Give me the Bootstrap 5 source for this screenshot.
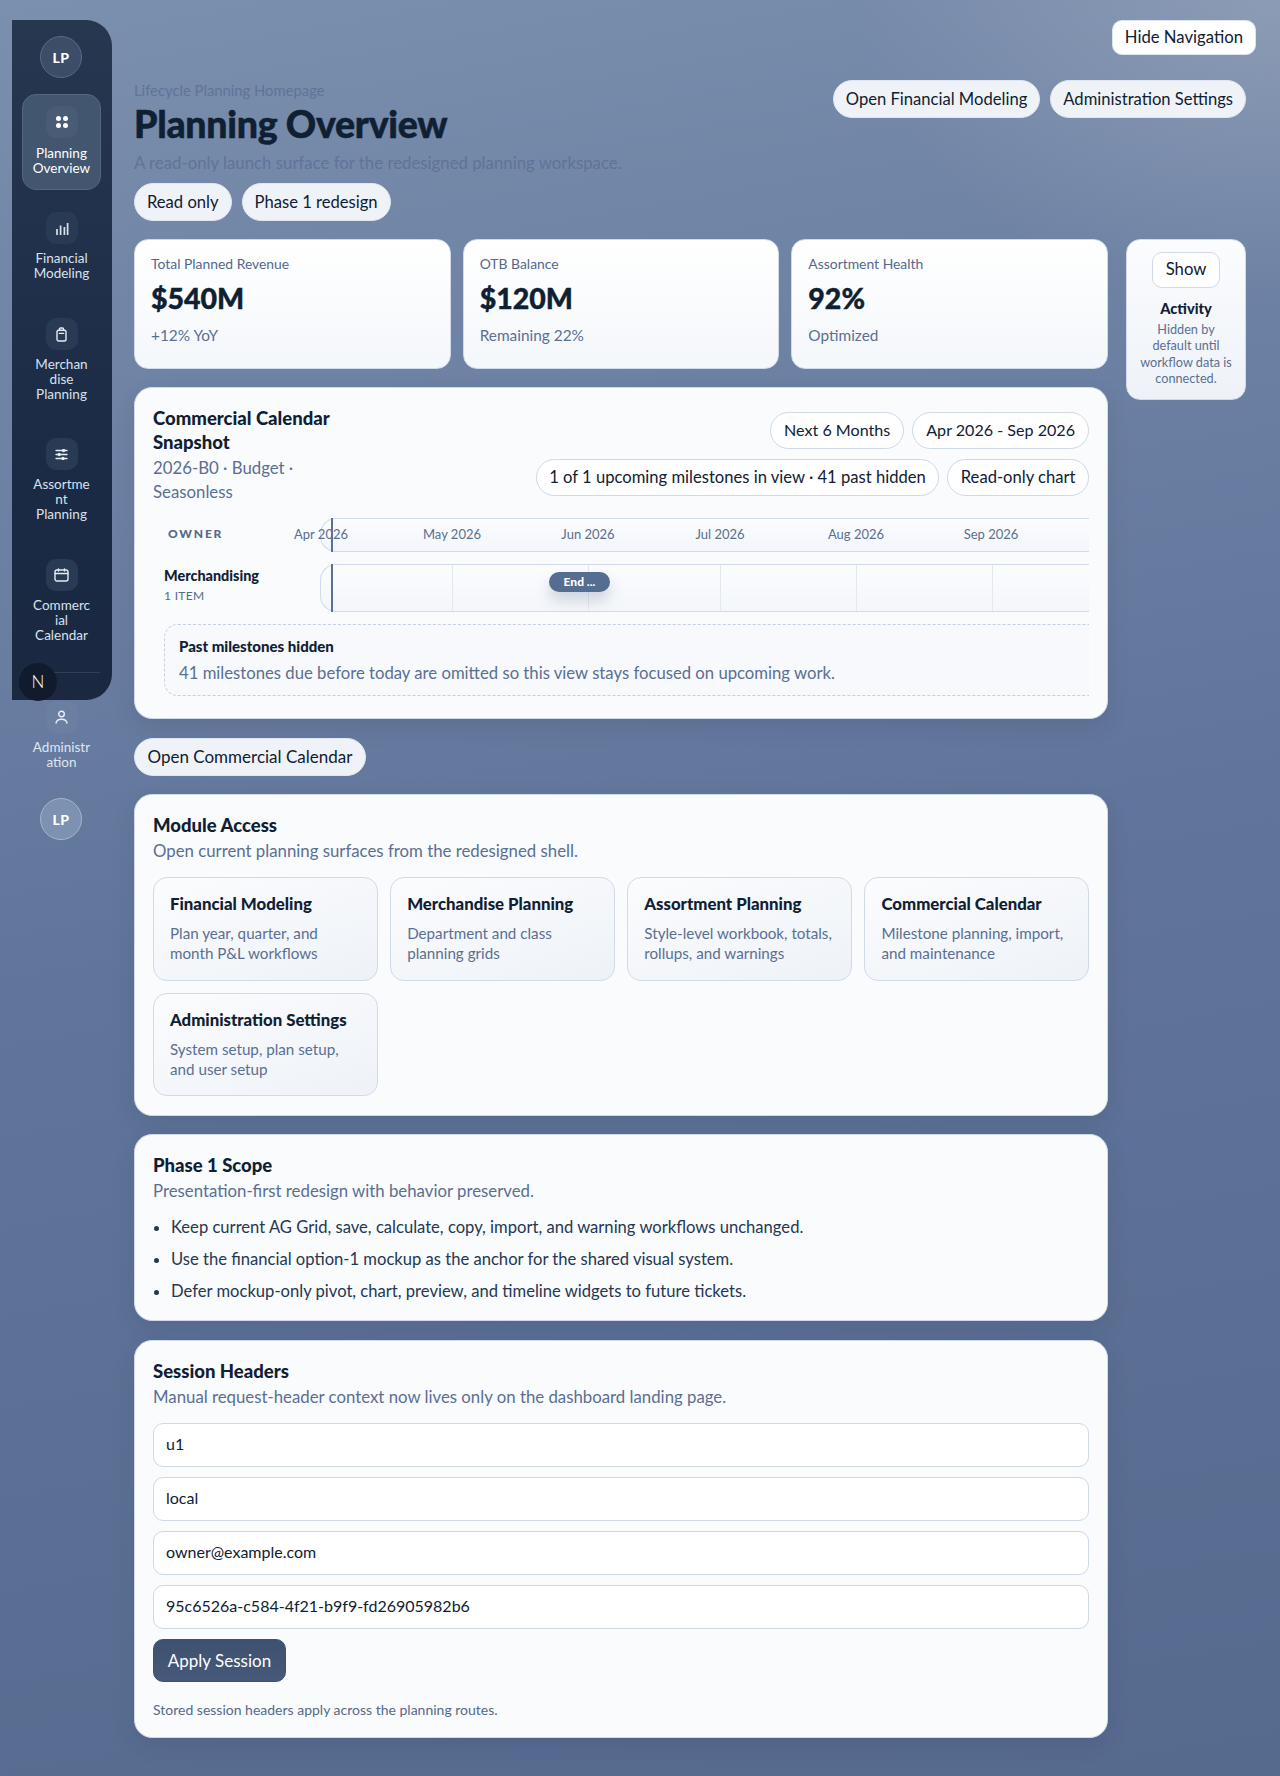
<!DOCTYPE html>
<html lang="en">
<head>
<meta charset="utf-8">
<title>Planning Overview</title>
<link rel="stylesheet" href="https://cdn.jsdelivr.net/npm/bootstrap@5.3.0/dist/css/bootstrap.min.css">
<style>
html,body{height:1776px}
body{font-family:"Lato","Open Sans","Liberation Sans",sans-serif;color:#102033;font-size:16.7px;line-height:1.5;
 background:radial-gradient(420px 300px at 100% 0,rgba(160,172,192,.55),rgba(160,172,192,0)),linear-gradient(170deg,#7b8fae 0,#7286a7 15%,#60759b 50%,#566a8e 100%);overflow:hidden}
.shell{padding-left:12px;height:1776px}
.side{width:100px;height:680px;margin-top:20px;flex:none;background:linear-gradient(180deg,#273750 0,#1a2a45 70%,#1a2840 100%);border-radius:0 26px 26px 0;position:relative;padding-top:16px}
.ava{width:42px;height:42px;border-radius:50%;background:#3b4d67;border:1px solid #596b84;color:#fff;font-weight:900;font-size:14px;letter-spacing:.5px;margin-left:28px}
.ava-b{background:#7d91b0;border-color:#a5b4ca;margin-top:9px}
.nav-it{width:79px;margin-left:10px;border-radius:14px;border:1px solid transparent;color:#d9e1ec;font-size:13.5px;line-height:15px;text-align:center;text-decoration:none;padding:11px 0}
.nav-it.is-on{background:#43566f;border-color:#54677f;color:#fff;margin-top:16px;height:96px}
.ico{width:32px;height:32px;border-radius:10px;background:#293a54;margin-bottom:7px}
.is-on .ico{background:#4a5c75;margin-bottom:8px}
.nav-out{color:#dfe6f0}
.nav-out .ico{background:#6a7fa2}
.nb{position:absolute;left:7px;top:643px;width:38px;height:38px;border-radius:50%;background:#101c2d;color:#fff;font-size:17px;font-weight:300;z-index:3}
.rule{height:1px;background:#2f4059;margin:0 12px 0 10px}
.main-col{padding:20px 24px 0 22px;min-width:0}
.hide-btn{background:#fff;border:1px solid #dbe3ee;border-radius:10px;color:#102033;font-size:16.7px;height:35px;padding:0 12px;line-height:1}
.pg-eye{font-size:14.8px;color:#5f7498;line-height:20px}
.pg-title{font-size:37.5px;font-weight:900;line-height:47px;margin:0;color:#102033;letter-spacing:-.3px;-webkit-text-stroke:.5px #102033}
.pg-sub{font-size:16.8px;color:#5f7498;line-height:24px;margin:4px 0 8px}
.chip{display:inline-flex;align-items:center;height:38px;padding:0 12.5px;border-radius:19px;background:#eff3f8;border:1px solid #dfe6ef;color:#102033;font-size:17px;white-space:nowrap;text-decoration:none}
.chip-m{font-size:16.6px;padding:0 12px}
.chip-w{background:#fff;border-color:#cfd9e6;height:37px;font-size:16.6px}
.chip-s{font-size:16.1px;padding:0 13px}
.head-row{margin-top:25px;padding-right:10px}
.tile{background:linear-gradient(180deg,#fff 0,#f4f7fb 100%);border:1px solid #d0dae8;border-radius:14px;height:130px;padding:15px 16px;flex:1 1 0}
.tile-lab{font-size:13.9px;color:#54688b;line-height:18px}
.tile-val{font-size:28.5px;font-weight:900;line-height:34px;margin-top:8px;color:#102033;-webkit-text-stroke:.4px #102033}
.tile-sub{font-size:15.4px;color:#5b6f92;line-height:20px;margin-top:10px}
.act{width:120px;height:161px;flex:none;background:linear-gradient(180deg,#fbfcfe,#eef2f8);border:1px solid #d0dae8;border-radius:14px;text-align:center;padding:12px 12px}
.act-btn{width:68px;height:36px;border:1px solid #d0dae8;background:#fff;border-radius:10px;font-size:16.7px;color:#102033;padding:0}
.act-t{font-size:14.6px;font-weight:900;margin-top:11px;line-height:20px}
.act-d{font-size:12.7px;line-height:16.4px;color:#5b6f92;margin-top:2px}
.panel{background:#f9fbfd;border:1px solid #d0dae8;border-radius:18px;padding:18px;width:974px;box-shadow:0 8px 22px rgba(30,45,75,.12)}
.p-title{font-size:18.5px;font-weight:900;line-height:24px;color:#102033;margin:0}
.p-sub{font-size:16.8px;color:#5b6f92;line-height:24px;margin:2px 0 0}
.cal-l{width:184px}
.owner{font-size:12px;font-weight:900;letter-spacing:1.8px;color:#56698a}
.tl-wrap{overflow:hidden;position:relative;height:178px;margin-top:14px;margin-left:11px}
.tl-head{position:absolute;left:156px;top:0;width:800px;height:34px;border:1px solid #d0dae8;border-right:0;border-radius:16px 0 0 16px;background:linear-gradient(180deg,#fbfcfe,#f3f6fa)}
.tl-track{position:absolute;left:156px;top:46px;width:800px;height:48px;border:1px solid #d0dae8;border-right:0;border-radius:16px 0 0 16px;background:linear-gradient(180deg,#fbfcfe,#f3f6fa)}
.mlab{position:absolute;top:16px;transform:translate(-50%,-50%);font-size:13px;color:#5a6e91;white-space:nowrap;line-height:1}
.today{position:absolute;left:167px;width:2px;background:#5a7097;z-index:2}
.gl{position:absolute;top:47px;height:46px;width:1px;background:#e3e8ef}
.ms{position:absolute;left:385px;top:54px;width:61px;height:20px;border-radius:10px;background:#566d92;color:#fff;font-size:12px;font-weight:900;line-height:20px;text-align:center;box-shadow:0 8px 14px rgba(60,80,115,.22)}
.own{position:absolute;top:16px;left:4px;transform:translateY(-50%);line-height:1}
.own2{position:absolute;left:0;top:48px}
.own2 b{display:block;font-size:14.4px;font-weight:900;line-height:20px;color:#102033}
.own2 span{display:block;font-size:12px;color:#56698a;line-height:18px;letter-spacing:.3px;margin-top:1px}
.past{position:absolute;left:0;top:106px;width:1000px;height:72px;border:1px dashed #c4d0e0;border-radius:14px;padding:10px 14px;background:#f7f9fc}
.past b{display:block;font-size:15px;font-weight:900;line-height:22px}
.past span{display:block;font-size:16.7px;color:#5b6f92;line-height:24px;margin-top:4px}
.mods{display:grid;grid-template-columns:repeat(4,1fr);gap:12px 12.6px;margin-top:14px}
.mod{height:103.5px;border:1px solid #d0dae8;border-radius:14px;background:linear-gradient(160deg,#fbfcfe,#eef2f7);padding:15px 16px;text-decoration:none;display:block}
.mod b{display:block;font-size:16.8px;font-weight:900;line-height:22px;color:#102033}
.mod span{display:block;font-size:15.2px;line-height:20px;color:#5b6f92;margin-top:8px}
.scope{margin:12px 0 0;padding-left:18px;font-size:16.6px;color:#253752;line-height:24px}
.scope li{margin-bottom:8px}
.scope li:last-child{margin-bottom:0}
.inp{height:44px;border:1px solid #cfd9e6;border-radius:10px;font-size:16px;color:#102033;padding:0 12px 3px;margin-bottom:10px;box-shadow:none}
.apply{background:linear-gradient(180deg,#3e516f,#46597a);color:#fff;border:1px solid #3e516f;border-radius:10px;height:43px;width:133px;font-size:17px;padding:0}
.hint{font-size:14px;color:#56698a;line-height:18px;margin-top:19px}
</style>
</head>
<body>
<div class="shell d-flex">
  <aside class="side">
    <div class="ava d-flex align-items-center justify-content-center">LP</div>
    <a class="nav-it is-on d-block" href="#">
      <span class="ico d-flex align-items-center justify-content-center mx-auto"><svg width="14" height="14" viewBox="0 0 14 14" fill="#fff"><circle cx="3.5" cy="3.5" r="2.5"/><circle cx="10.5" cy="3.5" r="2.5"/><circle cx="3.5" cy="10.5" r="2.5"/><circle cx="10.5" cy="10.5" r="2.5"/></svg></span>
      Planning<br>Overview</a>
    <a class="nav-it d-block" href="#" style="height:106px;margin-top:10px">
      <span class="ico d-flex align-items-center justify-content-center mx-auto"><svg width="14" height="13" viewBox="0 0 14 13" fill="none" stroke="#d9e1ec" stroke-width="1.7"><path d="M2 13V7M5.6 13V3.5M9.4 13V5M12.6 13V1"/></svg></span>
      Financial<br>Modeling</a>
    <a class="nav-it d-block" href="#" style="height:120px">
      <span class="ico d-flex align-items-center justify-content-center mx-auto"><svg width="11" height="15" viewBox="0 0 11 15" fill="none" stroke="#e6ecf4" stroke-width="1.4" stroke-linejoin="round" stroke-linecap="round"><rect x="1" y="3.2" width="9" height="10.8" rx="1.8"/><path d="M3.4 3.2V2.2C3.4 1.5 3.9 1 4.6 1H6.4C7.1 1 7.6 1.5 7.6 2.2V3.2M3.4 6.4H7.6"/></svg></span>
      Merchan<br>dise<br>Planning</a>
    <a class="nav-it d-block" href="#" style="height:121px">
      <span class="ico d-flex align-items-center justify-content-center mx-auto"><svg width="13" height="11" viewBox="0 0 13 11" fill="none" stroke="#e6ecf4" stroke-width="1.3" stroke-linecap="round"><path d="M1 1.5H12M1 5.5H12M1 9.5H12"/><circle cx="8.6" cy="1.5" r="1" fill="#e6ecf4"/><circle cx="4.2" cy="5.5" r="1" fill="#e6ecf4"/><circle cx="8" cy="9.5" r="1" fill="#e6ecf4"/></svg></span>
      Assortme<br>nt<br>Planning</a>
    <a class="nav-it d-block" href="#" style="height:125px">
      <span class="ico d-flex align-items-center justify-content-center mx-auto"><svg width="15" height="14" viewBox="0 0 15 14" fill="none" stroke="#e6ecf4" stroke-width="1.4" stroke-linecap="round"><rect x="1" y="2" width="13" height="11" rx="2"/><path d="M1 5.5H14M4.5 1V3M10.5 1V3"/></svg></span>
      Commerc<br>ial<br>Calendar</a>
    <div class="rule"></div>
    <a class="nav-it nav-out d-block" href="#" style="margin-top:16px;height:100px">
      <span class="ico d-flex align-items-center justify-content-center mx-auto"><svg width="13" height="14" viewBox="0 0 13 14" fill="none" stroke="#e9eef5" stroke-width="1.4" stroke-linecap="round"><circle cx="6.5" cy="4" r="2.8"/><path d="M1 13C1.6 10.4 3.6 9.2 6.5 9.2S11.4 10.4 12 13"/></svg></span>
      Administr<br>ation</a>
    <div class="ava ava-b d-flex align-items-center justify-content-center">LP</div>
    <div class="nb d-flex align-items-center justify-content-center">N</div>
  </aside>

  <div class="main-col flex-grow-1">
    <div class="d-flex justify-content-end"><button class="btn hide-btn" type="button">Hide Navigation</button></div>
    <div class="head-row d-flex justify-content-between align-items-start">
      <div>
        <div class="pg-eye">Lifecycle Planning Homepage</div>
        <h1 class="pg-title">Planning Overview</h1>
        <p class="pg-sub">A read-only launch surface for the redesigned planning workspace.</p>
        <div class="d-flex" style="gap:10px"><span class="chip chip-m">Read only</span><span class="chip chip-m">Phase 1 redesign</span></div>
      </div>
      <div class="d-flex" style="gap:10px"><a class="chip chip-m" href="#">Open Financial Modeling</a><a class="chip chip-m" href="#">Administration Settings</a></div>
    </div>

    <div class="d-flex" style="gap:18px;margin-top:18px;height:148px">
      <div style="width:974px" class="d-flex gap-0 justify-content-between">
        <div class="d-flex w-100" style="gap:12px">
          <div class="tile"><div class="tile-lab">Total Planned Revenue</div><div class="tile-val">$540M</div><div class="tile-sub">+12% YoY</div></div>
          <div class="tile"><div class="tile-lab">OTB Balance</div><div class="tile-val">$120M</div><div class="tile-sub">Remaining 22%</div></div>
          <div class="tile"><div class="tile-lab">Assortment Health</div><div class="tile-val">92%</div><div class="tile-sub">Optimized</div></div>
        </div>
      </div>
      <div class="act"><button class="btn act-btn" type="button">Show</button><div class="act-t">Activity</div><div class="act-d">Hidden by default until workflow data is connected.</div></div>
    </div>

    <section class="panel" style="height:332px">
      <div class="d-flex justify-content-between align-items-start">
        <div class="cal-l"><h2 class="p-title">Commercial Calendar Snapshot</h2><p class="p-sub">2026-B0 · Budget · Seasonless</p></div>
        <div class="d-flex flex-column align-items-end" style="gap:9.5px;margin-top:6px">
          <div class="d-flex" style="gap:8px"><span class="chip chip-w chip-s">Next 6 Months</span><span class="chip chip-w chip-s">Apr 2026 - Sep 2026</span></div>
          <div class="d-flex" style="gap:8px"><span class="chip chip-w">1 of 1 upcoming milestones in view · 41 past hidden</span><span class="chip chip-w">Read-only chart</span></div>
        </div>
      </div>
      <div class="tl-wrap">
        <span class="owner own">OWNER</span>
        <div class="tl-head"></div>
        <div class="today" style="top:0;height:34px"></div>
        <span class="mlab" style="left:157px">Apr 2026</span>
        <span class="mlab" style="left:288px">May 2026</span>
        <span class="mlab" style="left:424px">Jun 2026</span>
        <span class="mlab" style="left:556px">Jul 2026</span>
        <span class="mlab" style="left:692px">Aug 2026</span>
        <span class="mlab" style="left:827px">Sep 2026</span>
        <div class="own2"><b>Merchandising</b><span>1 ITEM</span></div>
        <div class="tl-track"></div>
        <div class="today" style="top:46px;height:48px"></div>
        <i class="gl" style="left:288px"></i><i class="gl" style="left:424px"></i><i class="gl" style="left:556px"></i><i class="gl" style="left:692px"></i><i class="gl" style="left:828px"></i>
        <div class="ms">End ...</div>
        <div class="past"><b>Past milestones hidden</b><span>41 milestones due before today are omitted so this view stays focused on upcoming work.</span></div>
      </div>
    </section>

    <a class="chip" href="#" style="margin-top:19px">Open Commercial Calendar</a>

    <section class="panel" style="height:322px;margin-top:18px">
      <h2 class="p-title">Module Access</h2>
      <p class="p-sub">Open current planning surfaces from the redesigned shell.</p>
      <div class="mods">
        <a class="mod" href="#"><b>Financial Modeling</b><span>Plan year, quarter, and month P&amp;L workflows</span></a>
        <a class="mod" href="#"><b>Merchandise Planning</b><span>Department and class planning grids</span></a>
        <a class="mod" href="#"><b>Assortment Planning</b><span>Style-level workbook, totals, rollups, and warnings</span></a>
        <a class="mod" href="#"><b>Commercial Calendar</b><span>Milestone planning, import, and maintenance</span></a>
        <a class="mod" href="#"><b>Administration Settings</b><span>System setup, plan setup, and user setup</span></a>
      </div>
    </section>

    <section class="panel" style="height:187px;margin-top:18px">
      <h2 class="p-title">Phase 1 Scope</h2>
      <p class="p-sub">Presentation-first redesign with behavior preserved.</p>
      <ul class="scope">
        <li>Keep current AG Grid, save, calculate, copy, import, and warning workflows unchanged.</li>
        <li>Use the financial option-1 mockup as the anchor for the shared visual system.</li>
        <li>Defer mockup-only pivot, chart, preview, and timeline widgets to future tickets.</li>
      </ul>
    </section>

    <section class="panel" style="height:398px;margin-top:19px">
      <h2 class="p-title">Session Headers</h2>
      <p class="p-sub" style="margin-bottom:14px">Manual request-header context now lives only on the dashboard landing page.</p>
      <input class="form-control inp" value="u1" aria-label="User">
      <input class="form-control inp" value="local" aria-label="Tenant">
      <input class="form-control inp" value="owner@example.com" aria-label="Email">
      <input class="form-control inp" value="95c6526a-c584-4f21-b9f9-fd26905982b6" aria-label="Session">
      <button class="btn apply" type="button">Apply Session</button>
      <div class="hint">Stored session headers apply across the planning routes.</div>
    </section>
  </div>
</div>
<script src="https://cdn.jsdelivr.net/npm/bootstrap@5.3.0/dist/js/bootstrap.bundle.min.js"></script>
</body>
</html>
